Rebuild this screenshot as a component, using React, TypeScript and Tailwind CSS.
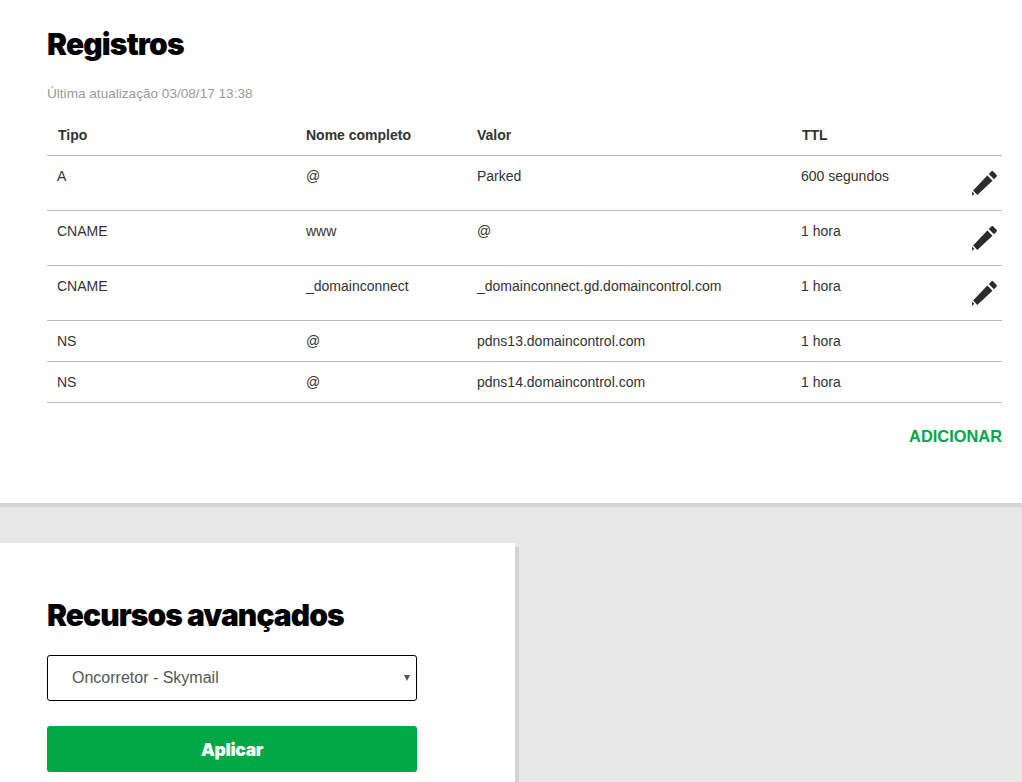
import React from "react";

// Registros page: DNS records table and the advanced features card

type DnsRecord = {
  tipo: string;
  nome: string;
  valor: string;
  ttl: string;
  editable: boolean;
};

const records: DnsRecord[] = [
  { tipo: "A", nome: "@", valor: "Parked", ttl: "600 segundos", editable: true },
  { tipo: "CNAME", nome: "www", valor: "@", ttl: "1 hora", editable: true },
  { tipo: "CNAME", nome: "_domainconnect", valor: "_domainconnect.gd.domaincontrol.com", ttl: "1 hora", editable: true },
  { tipo: "NS", nome: "@", valor: "pdns13.domaincontrol.com", ttl: "1 hora", editable: false },
  { tipo: "NS", nome: "@", valor: "pdns14.domaincontrol.com", ttl: "1 hora", editable: false },
];

function PencilIcon() {
  return (
    <svg viewBox="0 0 24 24" className="h-[33px] w-[33px] text-[#2b2b2b]" fill="currentColor" aria-hidden="true">
      <path d="M3 21v-3.2l1.6 1.6L3 21zM5.3 18.7l-1.6-1.6L14.06 6.19l3.75 3.75L6.75 20.3 5.3 18.7zM20.71 7.04c.39-.39.39-1.02 0-1.41l-2.34-2.34c-.39-.39-1.02-.39-1.41 0l-1.83 1.83 3.75 3.75 1.83-1.83z" />
    </svg>
  );
}

export default function App() {
  return (
    <div className="h-[782px] overflow-hidden bg-[#e7e7e7] font-['Liberation_Sans',Arial,sans-serif] text-sm text-[#333333]">
      <section className="h-[507px] border-b-4 border-[#d3d3d3] bg-white pl-[47px] pr-5 pt-[25px]">
        <h1 className="font-['Inter',sans-serif] text-[30px] leading-[38px] font-black tracking-[-0.85px] text-black">Registros</h1>
        <p className="mt-[21px] h-[20px] text-[13.6px] leading-[20px] text-[#9a9a9a]">Última atualização 03/08/17 13:38</p>

        <table className="mt-[10px] w-full table-fixed border-collapse">
          <thead>
            <tr className="h-[41px] border-b border-[#bdbdbd] text-left">
              <th className="w-[249px] pl-[11px] pt-[2px] align-middle font-bold">Tipo</th>
              <th className="w-[171px] pl-[10px] pt-[2px] align-middle font-bold">Nome completo</th>
              <th className="w-[325px] pl-[10px] pt-[2px] align-middle font-bold">Valor</th>
              <th className="pl-[10px] pt-[2px] align-middle font-bold">TTL</th>
            </tr>
          </thead>
          <tbody>
            {records.map((r, i) => (
              <tr key={i} className={`border-b border-[#bdbdbd] ${r.editable ? "h-[55px]" : "h-[41px]"}`}>
                <td className="pl-[10px] pt-[10px] align-top leading-[20px]">{r.tipo}</td>
                <td className="pl-[10px] pt-[10px] align-top leading-[20px]">{r.nome}</td>
                <td className="pl-[10px] pt-[10px] align-top leading-[20px]">{r.valor}</td>
                <td className="pl-[9px] pt-[10px] align-top leading-[20px]">
                  <div className="flex items-start justify-between pr-[1px]">
                    <span>{r.ttl}</span>
                    {r.editable && (
                      <span className="-mb-[10px] mt-[1px] h-[33px]">
                        <PencilIcon />
                      </span>
                    )}
                  </div>
                </td>
              </tr>
            ))}
          </tbody>
        </table>

        <div className="mt-[23px] flex justify-end">
          <a className="text-[16.4px] leading-[20px] font-bold text-[#00a846]">ADICIONAR</a>
        </div>
      </section>

      <section className="mt-[36px] h-[300px] w-[515px] bg-white pl-[47px] pt-[53px] shadow-[4px_4px_0_#d3d3d3]">
        <h2 className="font-['Inter',sans-serif] text-[30px] leading-[38px] font-black tracking-[-0.95px] text-black">Recursos avançados</h2>
        <div className="mt-[21px] flex h-[46px] w-[370px] items-center justify-between rounded-[3px] border border-black pl-[24px] pr-[6px] text-base text-[#555555]">
          <span>Oncorretor - Skymail</span>
          <span className="h-0 w-0 border-x-[3.5px] border-t-[6px] border-x-transparent border-t-[#555555]" />
        </div>
        <button className="mt-[25px] h-[46px] w-[370px] rounded-[3px] bg-[#00a846] font-['Inter',sans-serif] text-[17.5px] font-black tracking-[-0.3px] text-white">
          Aplicar
        </button>
      </section>
    </div>
  );
}
